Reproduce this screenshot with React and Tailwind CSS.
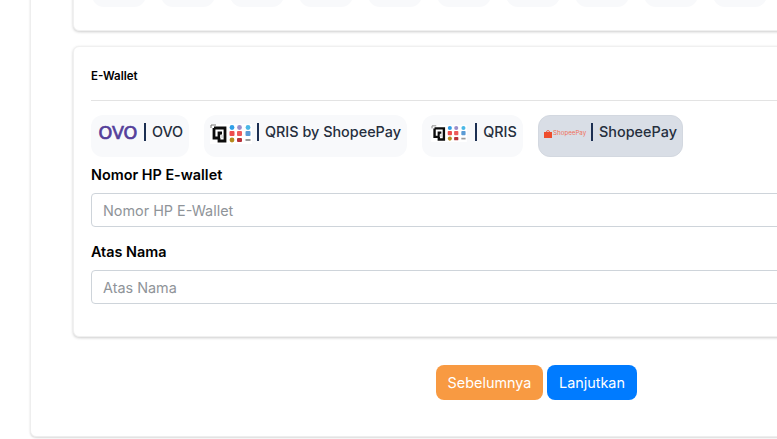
import React from 'react';

const topPills = [0, 1, 2, 3, 4, 5, 6, 7, 8, 9];

const QrisLogo = ({ className }) => (
  <svg viewBox="0 0 42 20" className={className}>
    <rect width="42" height="20" fill="#fff" />
    {/* qr mark */}
    <path d="M1 4V1h5" fill="none" stroke="#777" strokeWidth="1" />
    <path d="M4 4h11v13H9V9h3" fill="none" stroke="#0c0c0c" strokeWidth="2.8" />
    <path d="M4 4v10h4" fill="none" stroke="#0c0c0c" strokeWidth="2.8" />
    <rect x="10" y="11" width="3" height="3" fill="#ddd" />
    {/* app tiles */}
    <circle cx="22" cy="3.5" r="2.4" fill="#2f9fe8" />
    <circle cx="29.5" cy="3.5" r="2.4" fill="#9b8ec9" />
    <circle cx="38" cy="3.5" r="2.4" fill="#4bb8e6" />
    <rect x="19.5" y="7" width="5" height="5" rx="1" fill="#ee4d4d" />
    <rect x="27" y="7" width="5" height="5" rx="1" fill="#ee5a5a" />
    <rect x="35.5" y="7" width="5" height="5" rx="1" fill="#5b9bd5" />
    <circle cx="22" cy="16" r="2.4" fill="#b58a1c" />
    <rect x="27" y="14" width="5" height="4" rx="1" fill="#b8323a" />
    <rect x="35.5" y="15" width="5" height="2" fill="#9a9a9a" />
  </svg>
);

const Divider = () => <span className="w-[2px] h-[18px] bg-[#1c2f52] mx-[5px] shrink-0" />;

const WalletPill = ({ children, label, active, width }) => (
  <button
    className={`${width} h-[42px] pb-2 rounded-xl flex items-center justify-center shrink-0 text-[14.4px] font-medium text-[#252e3d] ${
      active ? 'bg-[#d9dee6] border border-[#d3d8e0]' : 'bg-[#f8f9fb]'
    }`}
  >
    {children}
    <Divider />
    <span className="ml-px">{label}</span>
  </button>
);

const Field = ({ label, placeholder }) => (
  <div>
    <div className="text-[14.4px] font-semibold text-black leading-[20px] mb-2">{label}</div>
    <input
      placeholder={placeholder}
      className="w-full h-[34px] px-[11px] rounded border border-[#ced4da] bg-white text-[14.4px] placeholder:text-[#8f9499]"
    />
  </div>
);

export default function App() {
  return (
    <div className="h-[439px] overflow-hidden bg-white font-['Inter',sans-serif]">
      <div className="mt-[-132px] ml-[30px] w-[1013px] h-[569px] bg-white rounded-md border border-[#eeeeee] shadow-[0_1px_2px_rgba(0,0,0,0.15)] pl-[42px] pr-[42px] pt-[20px]">
        {/* payment group above, mostly scrolled away */}
        <div className="h-[142px] bg-white rounded-md border border-[#f0f0f0] shadow-[0_1px_3px_rgba(0,0,0,0.2)] px-[18px] pt-[88px]">
          <div className="flex gap-[15px]">
            {topPills.map((p) => (
              <div key={p} className="w-[54px] h-[29px] rounded-xl bg-[#f8f9fb]" />
            ))}
          </div>
        </div>

        <div className="mt-[15px] h-[291px] bg-white rounded-md border border-[#f0f0f0] shadow-[0_1px_3px_rgba(0,0,0,0.2)] px-[17px]">
          <div className="h-[54px] flex items-center border-b border-[#e3e3e3] text-[11.5px] font-semibold text-black pt-[7px]">
            E-Wallet
          </div>

          <div className="flex gap-[15px] mt-[14px]">
            <WalletPill label="OVO" width="w-[98px]">
              <span className="w-[42px] mt-[3px] font-['DejaVu_Sans',sans-serif] font-normal text-[17.5px] leading-none text-[#55409a] [-webkit-text-stroke:0.7px_#55409a]">
                OVO
              </span>
            </WalletPill>
            <WalletPill label="QRIS by ShopeePay" width="w-[203px]">
              <QrisLogo className="w-[42px] h-[20px] mt-[3px]" />
            </WalletPill>
            <WalletPill label="QRIS" width="w-[101px]">
              <QrisLogo className="w-[42px] h-[17px] mt-[2px]" />
            </WalletPill>
            <WalletPill label="ShopeePay" width="w-[145px]" active>
              <span className="w-[42px] mt-[3px] flex items-center gap-px text-[#f0705a]">
                <svg viewBox="0 0 10 10" className="w-[8px] h-[8px] shrink-0">
                  <rect x="0" y="2.5" width="10" height="7.5" fill="#ee4d2d" />
                  <path d="M3 3a2 2.4 0 0 1 4 0" fill="none" stroke="#ee4d2d" strokeWidth="1" />
                </svg>
                <span className="text-[6.2px] font-normal leading-none">ShopeePay</span>
              </span>
            </WalletPill>
          </div>

          <div className="mt-2 flex flex-col gap-[15px]">
            <Field label="Nomor HP E-wallet" placeholder="Nomor HP E-Wallet" />
            <Field label="Atas Nama" placeholder="Atas Nama" />
          </div>
        </div>

        <div className="flex justify-center gap-1 mt-[28px]">
          <button className="h-[35px] w-[107px] rounded-lg bg-[#f89a42] text-white text-[14.4px]">Sebelumnya</button>
          <button className="h-[35px] w-[90px] rounded-lg bg-[#007bff] text-white text-[14.4px]">Lanjutkan</button>
        </div>
      </div>
    </div>
  );
}
